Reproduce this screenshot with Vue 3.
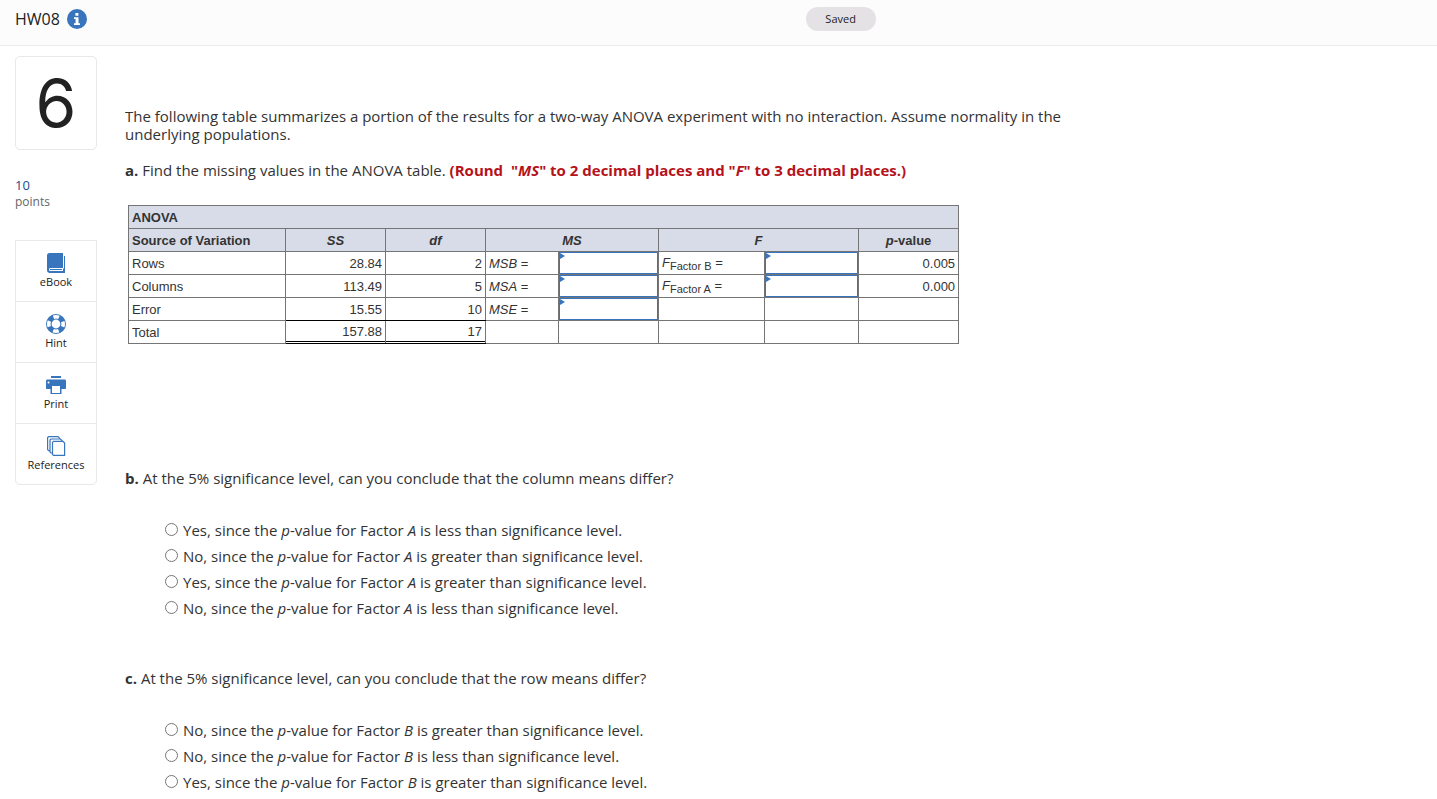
<script setup>
import { ref } from 'vue'

const rows = [
  { source: 'Rows', ss: '28.84', df: '2', ms: 'MSB', f: 'B', p: '0.005' },
  { source: 'Columns', ss: '113.49', df: '5', ms: 'MSA', f: 'A', p: '0.000' },
  { source: 'Error', ss: '15.55', df: '10', ms: 'MSE', f: '', p: '' },
]

const questions = [
  {
    id: 'b',
    subject: 'column',
    factor: 'A',
    options: [
      ['Yes', 'less'],
      ['No', 'greater'],
      ['Yes', 'greater'],
      ['No', 'less'],
    ],
  },
  {
    id: 'c',
    subject: 'row',
    factor: 'B',
    options: [
      ['No', 'greater'],
      ['No', 'less'],
      ['Yes', 'greater'],
    ],
  },
]

const answers = ref({ b: null, c: null })
</script>

<template>
  <div class="page">
    <header class="topbar">
      <h1 class="title">HW08</h1>
      <button class="info" type="button" aria-label="Assignment information">
        <svg viewBox="0 0 20 20" width="20" height="20" aria-hidden="true">
          <circle cx="10" cy="10" r="10" fill="#3875bc" />
          <path fill="#fff" d="M8.4 4h3v2.8h-3zM7 8.2h4.5v6H13V16H7v-1.800h1.600V10H7z" />
        </svg>
      </button>
      <span class="saved" role="status">Saved</span>
    </header>

    <div class="body">
      <aside class="side">
        <div class="number">6</div>
        <div class="points"><span class="value">10</span>points</div>
        <nav class="tools">
          <button class="tool" type="button">
            <svg viewBox="0 0 20 20" width="20" height="20" aria-hidden="true">
              <path fill="#3875bc" d="M3.500 0H17v15H4.500c-1 0-1.500.5-1.500 1.500S3.500 18 4.500 18H17v-2.500h1V3h1v17H4c-1.800 0-3-1.200-3-3V2.500C1 1 2 0 3.500 0z" />
              <path d="M4 16.500h12" stroke="#3875bc" stroke-width="1" />
            </svg>
            eBook
          </button>
          <button class="tool" type="button">
            <svg viewBox="0 0 20 20" width="20" height="20" aria-hidden="true">
              <circle cx="10" cy="10" r="7.200" fill="none" stroke="#3875bc" stroke-width="5.600" />
              <circle cx="10" cy="10" r="7.200" fill="none" stroke="#fff" stroke-width="3.600" stroke-dasharray="5.655 5.655" stroke-dashoffset="2.827" />
            </svg>
            Hint
          </button>
          <button class="tool" type="button">
            <svg viewBox="0 0 20 20" width="20" height="20" aria-hidden="true">
              <path fill="#3875bc" d="M5 1h10v2H5zM1.500 4.500h17c1 0 1.500.6 1.500 1.500V13c0 .7-.5 1-1 1h-3.500v5h-11v-5H1c-.6 0-1-.4-1-1V6c0-.9.600-1.500 1.500-1.500z" />
              <path fill="#fff" d="M6 11h8v7H6z" />
              <circle cx="2.500" cy="7.500" r="1" fill="#fff" />
            </svg>
            Print
          </button>
          <button class="tool" type="button">
            <svg viewBox="0 0 20 20" width="20" height="20" aria-hidden="true">
              <g fill="#fff" stroke="#3875bc" stroke-width="1.200">
                <path d="M2.600.6h9.400l1.600 1.600v12.400h-11l-1-1v-12z" />
                <path d="M5 3h9.400L16 4.600V17H5l-1-1V4z" />
                <path d="M7.500 5.400H17l1.600 1.600v12.400H7.500l-1-1v-12z" />
              </g>
            </svg>
            References
          </button>
        </nav>
      </aside>

      <main class="content">
        <p class="text">The following table summarizes a portion of the results for a two-way ANOVA experiment with no interaction. Assume normality in the underlying populations.</p>
        <p class="text">
          <b>a.</b> Find the missing values in the ANOVA table.
          <strong class="note">(Round &nbsp;"<i>MS</i>" to 2 decimal places and "<i>F</i>" to 3 decimal places.)</strong>
        </p>

        <table class="anova">
          <colgroup>
            <col class="c-source" /><col class="c-num" /><col class="c-num" /><col class="c-ms" />
            <col class="c-num" /><col class="c-f" /><col class="c-fin" /><col class="c-num" />
          </colgroup>
          <thead>
            <tr><th colspan="8" class="left">ANOVA</th></tr>
            <tr>
              <th class="left">Source of Variation</th>
              <th><i>SS</i></th>
              <th><i>df</i></th>
              <th colspan="2"><i>MS</i></th>
              <th colspan="2"><i>F</i></th>
              <th><i>p</i>-value</th>
            </tr>
          </thead>
          <tbody>
            <tr v-for="(r, i) in rows" :key="r.source">
              <td>{{ r.source }}</td>
              <td class="num" :class="{ summed: i === rows.length - 1 }">{{ r.ss }}</td>
              <td class="num" :class="{ summed: i === rows.length - 1 }">{{ r.df }}</td>
              <td><i>{{ r.ms }}</i> =</td>
              <td class="entry"><input type="text" :aria-label="r.ms" /></td>
              <td class="factor"><template v-if="r.f"><i>F</i><sub>Factor {{ r.f }}</sub> =</template></td>
              <td :class="{ entry: r.f }"><input v-if="r.f" type="text" :aria-label="'F Factor ' + r.f" /></td>
              <td class="num">{{ r.p }}</td>
            </tr>
            <tr>
              <td>Total</td>
              <td class="num total">157.88</td>
              <td class="num total">17</td>
              <td></td><td></td><td></td><td></td><td></td>
            </tr>
          </tbody>
        </table>

        <fieldset v-for="q in questions" :key="q.id" class="question">
          <legend class="text"><b>{{ q.id }}.</b> At the 5% significance level, can you conclude that the {{ q.subject }} means differ?</legend>
          <div class="options">
            <label v-for="(o, i) in q.options" :key="i" class="option">
              <input v-model="answers[q.id]" type="radio" :name="'question-' + q.id" :value="i" />
              <span>{{ o[0] }}, since the <i>p</i>-value for Factor <i>{{ q.factor }}</i> is {{ o[1] }} than significance level.</span>
            </label>
          </div>
        </fieldset>
      </main>
    </div>
  </div>
</template>

<style>
body {
  margin: 0;
  background: #fff;
}
</style>

<style scoped>
.page {
  color: #222;
  font-family: "Open Sans", "Noto Sans", sans-serif;
}
.topbar {
  display: grid;
  grid-template-columns: auto auto 1fr;
  align-items: center;
  column-gap: 7px;
  box-sizing: border-box;
  height: 46px;
  padding: 0 15px 8px;
  background: #fcfcfc;
  border-bottom: 1px solid #ececec;
}
.title {
  margin: 0;
  font-size: 16px;
  font-weight: 400;
  line-height: 18px;
}
.info {
  display: flex;
  padding: 0;
  border: 0;
  background: none;
}
.saved {
  justify-self: start;
  width: 70px;
  margin-left: calc(56% - 32px);
  padding-bottom: 1px;
  border-radius: 12px;
  background: #e4e2e5;
  font-size: 11px;
  line-height: 23px;
  text-align: center;
}
.body {
  display: flex;
  gap: 28px;
  padding: 10px 15px 0;
}
.side {
  flex: none;
  width: 82px;
}
.number {
  box-sizing: border-box;
  height: 94px;
  border: 1px solid #e8e8e8;
  border-radius: 5px;
  font-family: Inter, "Open Sans", sans-serif;
  font-size: 66px;
  line-height: 92px;
  text-align: center;
}
.points {
  margin: 27px 0 30px;
  color: #666;
  font-size: 12px;
  line-height: 16px;
}
.value {
  display: block;
  color: #1b4a8f;
  font-size: 13px;
  line-height: 17px;
}
.tools {
  border: 1px solid #e8e8e8;
  border-radius: 0 0 5px 5px;
}
.tool {
  display: flex;
  flex-direction: column;
  align-items: center;
  gap: 1px;
  box-sizing: border-box;
  width: 100%;
  height: 60px;
  padding: 12px 0 0;
  border: 0;
  background: none;
  color: #222;
  font-family: inherit;
  font-size: 11px;
  line-height: 16px;
}
.tool + .tool {
  height: 61px;
  border-top: 1px solid #e8e8e8;
}
.content {
  flex: 1;
  max-width: 950px;
  padding-top: 51px;
}
.text {
  margin: 0 0 18px;
  color: #333;
  font-size: 15px;
  line-height: 18px;
}
.note {
  color: #b5121b;
}
.anova {
  width: 831px;
  margin: 26px 0 125px 3px;
  border-collapse: collapse;
  table-layout: fixed;
  color: #333;
  font-family: "Liberation Sans", Arial, sans-serif;
  font-size: 13px;
  line-height: 16px;
}
.c-source { width: 157px; }
.c-num { width: 100px; }
.c-ms { width: 73px; }
.c-f { width: 106px; }
.c-fin { width: 94px; }
.anova th,
.anova td {
  box-sizing: border-box;
  height: 23px;
  padding: 2px 3px 0;
  border: 1px solid #757575;
  white-space: nowrap;
}
.anova th {
  background: #d8dce8;
  text-align: center;
}
.anova .left {
  text-align: left;
}
.anova .num {
  text-align: right;
}
.anova .summed {
  border-bottom-color: #000;
}
.anova .total {
  padding-top: 0;
  border-bottom-color: #000;
  box-shadow: inset 0 -1px #fff, inset 0 -2px #000;
}
.anova .factor {
  padding-top: 0;
  line-height: 12px;
}
.factor sub {
  font-size: 11px;
  line-height: 0;
  vertical-align: -3px;
}
.anova .entry {
  position: relative;
  padding: 0;
}
.entry input {
  display: block;
  box-sizing: border-box;
  width: 100%;
  height: 22px;
  padding: 0 6px;
  border: 1px solid #3875bc;
  outline: 0;
  background: #fff;
  font: inherit;
}
.entry::after {
  content: "";
  position: absolute;
  top: 1px;
  left: 1px;
  border: solid transparent;
  border-width: 3px 0 3px 5px;
  border-left-color: #3875bc;
}
.question {
  min-width: 0;
  margin: 0 0 48px;
  padding: 0;
  border: 0;
}
.question legend {
  margin: 0;
  padding: 0;
}
.question:last-child {
  margin-bottom: 0;
}
.options {
  padding: 30px 0 0 40px;
}
.option {
  display: flex;
  align-items: center;
  gap: 5px;
  height: 26px;
  color: #333;
  font-size: 15px;
  line-height: 18px;
}
.option input {
  width: 13px;
  height: 13px;
  margin: 0 0 2px;
}
</style>
